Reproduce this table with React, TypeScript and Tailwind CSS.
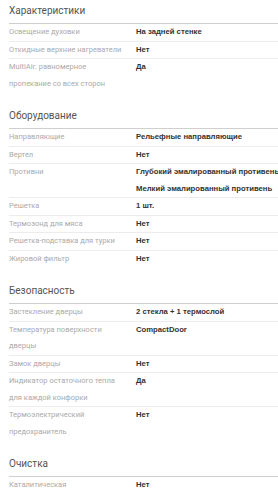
type Row = { label: string; values: string[] };
type Section = { title: string; rows: Row[] };

const sections: Section[] = [
  {
    title: "Характеристики",
    rows: [
      { label: "Освещение духовки", values: ["На задней стенке"] },
      { label: "Откидные верхние нагреватели", values: ["Нет"] },
      { label: "MultiAir: равномерное пропекание со всех сторон", values: ["Да"] },
    ],
  },
  {
    title: "Оборудование",
    rows: [
      { label: "Направляющие", values: ["Рельефные направляющие"] },
      { label: "Вертел", values: ["Нет"] },
      {
        label: "Противни",
        values: ["Глубокий эмалированный противень", "Мелкий эмалированный противень"],
      },
      { label: "Решетка", values: ["1 шт."] },
      { label: "Термозонд для мяса", values: ["Нет"] },
      { label: "Решетка-подставка для турки", values: ["Нет"] },
      { label: "Жировой фильтр", values: ["Нет"] },
    ],
  },
  {
    title: "Безопасность",
    rows: [
      { label: "Застекление дверцы", values: ["2 стекла + 1 термослой"] },
      { label: "Температура поверхности дверцы", values: ["CompactDoor"] },
      { label: "Замок дверцы", values: ["Нет"] },
      { label: "Индикатор остаточного тепла для каждой конфорки", values: ["Да"] },
      { label: "Термоэлектрический предохранитель", values: ["Нет"] },
    ],
  },
  {
    title: "Очистка",
    rows: [{ label: "Каталитическая", values: ["Нет"] }],
  },
];

const SpecRow = ({ row, last }: { row: Row; last: boolean }) => (
  <div className={`flex ${last ? "" : "border-b border-[#ececec]"}`}>
    <div className="w-[127px] shrink-0 pr-[8px] text-[7.5px] leading-[16.5px] text-[#aaa]">
      {row.label}
    </div>
    <div className="flex flex-col text-[7.7px] leading-[16.5px] font-bold text-[#333] font-['Liberation_Sans',sans-serif]">
      {row.values.map((v) => (
        <span key={v} className="whitespace-nowrap">
          {v}
        </span>
      ))}
    </div>
  </div>
);

export default function App() {
  return (
    <div className="w-[278px] h-[500px] overflow-hidden bg-white pl-[9px] font-['Roboto','Liberation_Sans',sans-serif]">
      {sections.map((s, i) => (
        <section key={s.title} className={i === 0 ? "" : "mt-[13px]"}>
          <h2 className="pt-[1px] pb-[2px] text-[10px] leading-[20px] text-[#555] border-b border-[#cfcfcf]">
            {s.title}
          </h2>
          {s.rows.map((r, j) => (
            <SpecRow key={r.label} row={r} last={j === s.rows.length - 1} />
          ))}
        </section>
      ))}
    </div>
  );
}
